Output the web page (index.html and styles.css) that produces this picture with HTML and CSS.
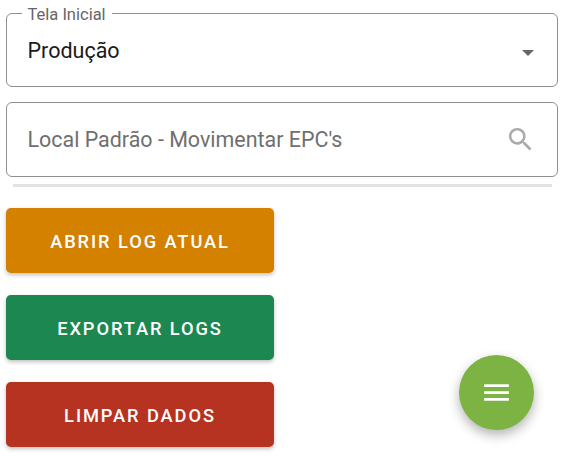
FILE: index.html
```html
<!DOCTYPE html>
<html lang="en">
<head>
    <meta charset="UTF-8">
    <meta name="viewport" content="width=device-width, initial-scale=1.0">
    <title>Configurações</title>
    <link rel="stylesheet" href="styles.css">
</head>
<body>

<div class="page">
    <!-- Tela inicial -->
    <fieldset class="field select-field">
        <legend class="field-label">Tela Inicial</legend>
        <span class="field-value">Produção</span>
        <span class="select-arrow"></span>
    </fieldset>

    <!-- Local padrao -->
    <div class="field search-field">
        <span class="field-placeholder">Local Padrão - Movimentar EPC's</span>
        <svg class="search-icon" viewBox="0 0 24 24" width="31" height="31">
            <path fill="#aaaaaa" d="M15.5 14h-.79l-.28-.27A6.47 6.47 0 0 0 16 9.5 6.5 6.5 0 1 0 9.5 16c1.61 0 3.09-.59 4.23-1.57l.27.28v.79l5 4.99L20.49 19l-4.99-5zm-6 0C7.01 14 5 11.99 5 9.5S7.01 5 9.5 5 14 7.01 14 9.5 11.99 14 9.5 14z"/>
        </svg>
    </div>

    <div class="divider"></div>

    <!-- Botoes -->
    <div class="button-list">
        <button class="action-button orange">ABRIR LOG ATUAL</button>
        <button class="action-button green">EXPORTAR LOGS</button>
        <button class="action-button red">LIMPAR DADOS</button>
    </div>
</div>

<button class="fab">
    <svg viewBox="0 0 24 24" width="33" height="33">
        <path fill="#ffffff" d="M3 18h18v-2H3v2zm0-5h18v-2H3v2zm0-7v2h18V6H3z"/>
    </svg>
</button>

</body>
</html>
```

FILE: styles.css
```css
html, body {
    margin: 0;
    padding: 0;
}
body {
    font-family: Roboto, "Liberation Sans", sans-serif;
    background-color: white;
    width: 565px;
    height: 460px;
    overflow: hidden;
}
.page {
    padding: 4px 6px 0 6px;
}
.field {
    box-sizing: border-box;
    width: 552px;
    height: 75px;
    margin: 0;
    border: 1.5px solid #8f8f8f;
    border-radius: 6px;
    display: flex;
    align-items: center;
    justify-content: space-between;
    background-color: white;
}
.select-field {
    display: block;
    position: relative;
    height: 83px;
    padding: 0 20.5px;
}
.field-label {
    font-size: 16.5px;
    line-height: 16px;
    color: #666666;
    padding: 3px 6px 0 6px;
    margin-left: -6px;
}
.field-value {
    display: block;
    font-size: 21.5px;
    line-height: 28px;
    color: #1a1a1a;
    margin-top: 14px;
}
.select-arrow {
    position: absolute;
    right: 23px;
    top: 26.5px;
    width: 0;
    height: 0;
    border-left: 6.5px solid transparent;
    border-right: 6.5px solid transparent;
    border-top: 6.5px solid #666666;
}
.search-field {
    margin-top: 15px;
    padding: 0 21px 0 20.5px;
}
.field-placeholder {
    font-size: 21.45px;
    color: #6f6f6f;
}
.search-icon {
    display: block;
}
.divider {
    height: 3px;
    width: 539px;
    margin: 7px 0 0 7px;
    background-color: #e2e2e2;
}
.button-list {
    display: flex;
    flex-direction: column;
    gap: 22px;
    margin-top: 21px;
    width: 268px;
}
.action-button {
    height: 65px;
    border: none;
    border-radius: 5px;
    padding: 2px 0 0 0;
    color: white;
    font-family: inherit;
    font-size: 18.3px;
    font-weight: 500;
    letter-spacing: 1.9px;
    box-shadow: 0 2px 4px rgba(0, 0, 0, 0.25);
}
.orange {
    background-color: #d48100;
}
.green {
    background-color: #1c8750;
}
.red {
    background-color: #b73321;
}
.fab {
    position: absolute;
    left: 459px;
    top: 355px;
    width: 75px;
    height: 75px;
    border: none;
    border-radius: 50%;
    padding: 0;
    display: flex;
    align-items: center;
    justify-content: center;
    background-color: #7cb342;
    box-shadow: 0 5px 12px rgba(0, 0, 0, 0.3);
}
```
